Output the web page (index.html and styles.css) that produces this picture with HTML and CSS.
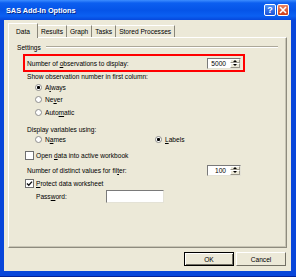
FILE: index.html
```html
<!DOCTYPE html>
<html lang="en">
<head>
    <meta charset="UTF-8">
    <title>SAS Add-In Options</title>
    <link rel="stylesheet" href="styles.css">
</head>
<body>
    <div class="window">
        <div class="titlebar">
            <span class="title">SAS Add-In Options</span>
            <div class="title-buttons">
                <span class="tbtn help">?</span>
                <span class="tbtn close">
                    <svg width="8" height="8" viewBox="0 0 8 8"><path d="M1 1 L7 7 M7 1 L1 7" stroke="#fff" stroke-width="1.6"/></svg>
                </span>
            </div>
        </div>

        <div class="client">
            <div class="tabs">
                <div class="tab active">Data</div>
                <div class="tab">Results</div>
                <div class="tab">Graph</div>
                <div class="tab">Tasks</div>
                <div class="tab">Stored Processes</div>
            </div>

            <div class="panel">
                <div class="row group-title">
                    <span>Settings</span>
                    <span class="rule"></span>
                </div>

                <div class="row highlight">
                    <span>Number of <u>o</u>bservations to display:</span>
                    <div class="spin">
                        <span class="spin-value">5000</span>
                        <span class="spin-btns"><span class="arrow up"></span><span class="arrow down"></span></span>
                    </div>
                </div>

                <div class="row caption">Show observation number in first column:</div>
                <div class="row option mt2"><span class="radio on"></span><span>A<u>l</u>ways</span></div>
                <div class="row option mt2"><span class="radio"></span><span>Ne<u>v</u>er</span></div>
                <div class="row option mt3"><span class="radio"></span><span>Auto<u>m</u>atic</span></div>

                <div class="row caption tall mt7">Display variables using:</div>
                <div class="row option">
                    <span class="choice"><span class="radio"></span><span>N<u>a</u>mes</span></span>
                    <span class="choice"><span class="radio on"></span><span><u>L</u>abels</span></span>
                </div>

                <div class="row checkline mt6"><span class="check"></span><span>Open <u>d</u>ata into active workbook</span></div>

                <div class="row distinct mt4">
                    <span>Number of distinct values for fil<u>t</u>er:</span>
                    <div class="spin">
                        <span class="spin-value">100</span>
                        <span class="spin-btns"><span class="arrow up"></span><span class="arrow down"></span></span>
                    </div>
                </div>

                <div class="row checkline mt2">
                    <span class="check">
                        <svg width="7" height="7" viewBox="0 0 7 7"><path d="M1 3.4 L2.8 5.2 L6 1.6" fill="none" stroke="#111" stroke-width="1.4"/></svg>
                    </span>
                    <span><u>P</u>rotect data worksheet</span>
                </div>
                <div class="row password-row mt2">
                    <span class="password-label">Pass<u>w</u>ord:</span>
                    <input class="password" type="password">
                </div>
            </div>

            <div class="footer">
                <button class="button default">OK</button>
                <button class="button">Cancel</button>
            </div>
        </div>
    </div>
</body>
</html>
```

FILE: styles.css
```css
body {
    margin: 0;
    font-family: "Liberation Sans", Arial, sans-serif;
    font-size: 6.6px;
    color: #000;
}
.window {
    width: 296px;
    height: 277px;
    box-sizing: border-box;
    display: flex;
    flex-direction: column;
    background: #0846da;
    box-shadow: inset 0 -1px 0 #00229a;
}
.titlebar {
    height: 20px;
    display: flex;
    align-items: center;
    justify-content: space-between;
    padding: 0 7px 0 6px;
    background: linear-gradient(to bottom, #3d8dff 0, #0c5ff0 3px, #0554e8 10px, #0b60f2 16px, #0648dc 20px);
    color: #fff;
}
.title {
    font-weight: bold;
    font-size: 7.3px;
    margin-top: 1px;
    text-shadow: 1px 1px 0 #0a2a8a;
}
.title-buttons {
    display: flex;
    gap: 1px;
}
.tbtn {
    width: 12px;
    height: 12px;
    box-sizing: border-box;
    border: 1px solid #fff;
    border-radius: 2px;
    display: flex;
    align-items: center;
    justify-content: center;
    color: #fff;
    font-weight: bold;
    font-size: 9px;
}
.help {
    background: linear-gradient(to bottom, #4d8ff7, #1b52d8);
}
.close {
    background: linear-gradient(to bottom, #ec8462, #cf3d16);
}
.client {
    flex: 1;
    margin: 0 5px 6px 4px;
    padding: 3px 4px 0 4px;
    background: #ece9d8;
    display: flex;
    flex-direction: column;
}
.tabs {
    height: 14px;
    display: flex;
    align-items: flex-start;
}
.tab {
    height: 12px;
    margin-top: 2px;
    padding: 0 3px;
    display: flex;
    align-items: center;
    border-top: 1px solid #fff;
    border-right: 1px solid #8a877a;
    box-sizing: border-box;
}
.tab.active {
    height: 15px;
    margin-top: 0;
    padding: 0 7px;
    border-left: 1px solid #fff;
    background: #ece9d8;
    position: relative;
    z-index: 1;
}
.panel {
    height: 211px;
    box-sizing: border-box;
    border: 1px solid;
    border-color: #fff #8e8b7e #8e8b7e #fff;
    box-shadow: inset -1px -1px 0 #c8c5b5;
    padding: 4px 8px 0 8px;
    display: flex;
    flex-direction: column;
}
.row {
    display: flex;
    align-items: center;
    white-space: nowrap;
}
.mt2 { margin-top: 2px; }
.mt3 { margin-top: 3px; }
.mt4 { margin-top: 4px; }
.mt6 { margin-top: 6px; }
.mt7 { margin-top: 7px; }
.group-title {
    height: 10px;
}
.rule {
    flex: 1;
    margin-left: 5px;
    border-top: 1px solid #aca899;
    border-bottom: 1px solid #fff;
}
.highlight {
    margin: 2px 0 0 6px;
    width: 222px;
    height: 18px;
    box-sizing: border-box;
    border: 2px solid #f00;
    padding: 0 2px;
    justify-content: space-between;
}
.caption {
    height: 8px;
    margin-left: 10px;
}
.caption.tall {
    height: 10px;
}
.option {
    height: 10px;
    margin-left: 18px;
}
.choice {
    display: flex;
    align-items: center;
    width: 120px;
}
.radio {
    width: 7px;
    height: 7px;
    margin-right: 3px;
    border-radius: 50%;
    border: 1px solid #8d8d8d;
    background: #fff;
    box-sizing: border-box;
}
.radio.on {
    background: radial-gradient(circle, #000 0, #000 1.3px, #fff 1.8px);
}
.checkline {
    height: 10px;
    margin-left: 8px;
}
.check {
    width: 9px;
    height: 9px;
    margin-right: 2px;
    box-sizing: border-box;
    border: 1px solid #6f6f6f;
    background: #fff;
    display: flex;
    align-items: center;
    justify-content: center;
}
.distinct {
    height: 12px;
    margin-left: 10px;
    width: 214px;
    justify-content: space-between;
}
.spin {
    width: 34px;
    height: 11px;
    box-sizing: border-box;
    border: 1px solid;
    border-color: #7a7a7a #e4e2d6 #e4e2d6 #7a7a7a;
    background: #fff;
    display: flex;
}
.spin-value {
    flex: 1;
    text-align: right;
    padding-right: 4px;
    line-height: 9px;
}
.spin-btns {
    width: 10px;
    display: flex;
    flex-direction: column;
}
.arrow {
    flex: 1;
    background: #ece9d8;
    border: 1px solid;
    border-color: #fff #9a978a #9a978a #fff;
    box-sizing: border-box;
    display: flex;
    align-items: center;
    justify-content: center;
}
.arrow::after {
    content: "";
    border-left: 2px solid transparent;
    border-right: 2px solid transparent;
}
.arrow.up::after {
    border-bottom: 2px solid #000;
}
.arrow.down::after {
    border-top: 2px solid #000;
}
.password-row {
    height: 13px;
    margin-left: 19px;
}
.password-label {
    width: 70px;
}
.password {
    width: 58px;
    height: 13px;
    box-sizing: border-box;
    margin: 0;
    padding: 0;
    border: 1px solid;
    border-color: #7a7a7a #e4e2d6 #e4e2d6 #7a7a7a;
    background: #fff;
}
.footer {
    display: flex;
    justify-content: flex-end;
    gap: 2px;
    padding: 4px 1px 0 0;
}
.button {
    width: 50px;
    height: 14px;
    margin: 0;
    padding: 0;
    font-family: inherit;
    font-size: 6.6px;
    color: #000;
    background: #ece9d8;
    box-sizing: border-box;
    border: 1px solid;
    border-color: #fff #716f64 #716f64 #fff;
}
.button.default {
    border-color: #000;
    box-shadow: inset 1px 1px 0 #fff, inset -1px -1px 0 #716f64;
}
```
